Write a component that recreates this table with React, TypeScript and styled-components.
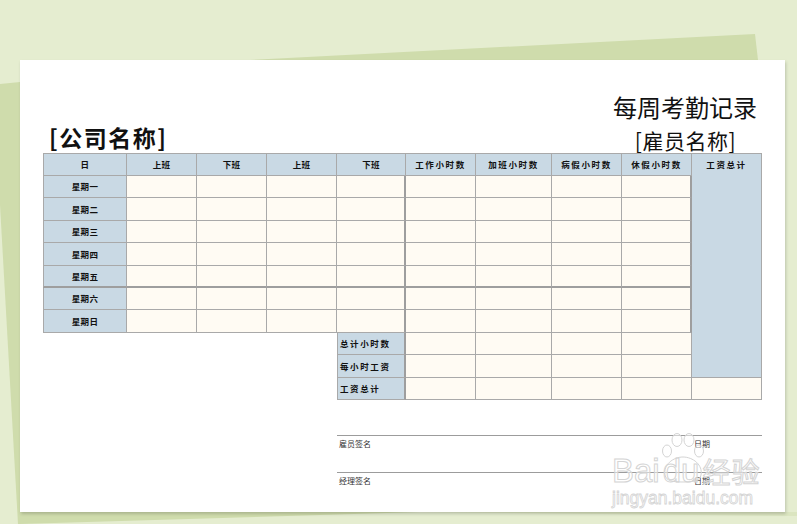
import React from "react";
import styled, { createGlobalStyle } from "styled-components";

const Global = createGlobalStyle`
  html, body { margin: 0; padding: 0; }
  body { width: 797px; height: 524px; overflow: hidden; background: #e5edd0; }
`;

const CJK = `"Noto Sans CJK SC", "Noto Sans", sans-serif`;

const Page = styled.div`
  position: relative;
  width: 797px;
  height: 524px;
  box-sizing: border-box;
  padding: 60px 12px 12px 20px;
  background: #e5edd0;
  overflow: hidden;
`;

const Backdrop = styled.svg`
  position: absolute;
  inset: 0;
  z-index: 0;
`;

const Sheet = styled.div`
  position: relative;
  z-index: 1;
  width: 765px;
  height: 452px;
  box-sizing: border-box;
  padding: 0 23px;
  background: #ffffff;
  box-shadow: 1px 2px 3px rgba(0, 0, 0, 0.18);
  display: flex;
  flex-direction: column;
`;

const Heading = styled.div`
  height: 93px;
  display: flex;
  justify-content: space-between;
  align-items: flex-end;
`;

const Company = styled.div`
  font-family: ${CJK};
  font-weight: 700;
  font-size: 23px;
  line-height: 26px;
  letter-spacing: 1.5px;
  color: #111;
  padding-left: 6px;
  margin-bottom: 3px;
`;

const TitleBlock = styled.div`
  display: flex;
  flex-direction: column;
  align-items: flex-end;
  padding-right: 5px;
`;

const Title = styled.div`
  font-family: ${CJK};
  font-weight: 400;
  font-size: 24px;
  line-height: 28px;
  color: #111;
`;

const Employee = styled.div`
  font-family: ${CJK};
  font-weight: 400;
  font-size: 21px;
  line-height: 26px;
  margin-top: 6px;
  margin-right: 21px;
  letter-spacing: 0.5px;
  color: #111;
`;

const colW = [84, 70, 70, 70, 69, 70, 76, 70, 70, 70];
const rowH = [23, 22, 23, 22, 23, 22, 22, 23, 22, 23, 22];

const Grid = styled.div`
  display: grid;
  grid-template-columns: ${colW.map((w) => `${w}px`).join(" ")};
  grid-template-rows: ${rowH.map((h) => `${h}px`).join(" ")};
  width: 719px;
`;

type CellProps = {
  $col: number;
  $row: number;
  $span?: number;
  $kind: "head" | "cream";
  $left?: boolean;
  $top?: boolean;
  $align?: "center" | "left" | "top";
  $spaced?: boolean;
  $heavyRight?: boolean;
  $heavyBottom?: boolean;
};

const Cell = styled.div<CellProps>`
  grid-column: ${(p) => p.$col};
  grid-row: ${(p) => p.$row} / span ${(p) => p.$span ?? 1};
  box-sizing: border-box;
  background: ${(p) => (p.$kind === "head" ? "#c9d9e4" : "#fffbf3")};
  border-right: ${(p) => (p.$heavyRight ? "2px solid #9e9e9e" : "1px solid #a9a9a9")};
  border-bottom: ${(p) => (p.$heavyBottom ? "2px solid #9e9e9e" : "1px solid #a9a9a9")};
  border-left: ${(p) => (p.$left ? "1px solid #a9a9a9" : "none")};
  border-top: ${(p) => (p.$top ? "1px solid #a9a9a9" : "none")};
  display: flex;
  justify-content: ${(p) => (p.$align === "left" ? "flex-start" : "center")};
  align-items: ${(p) => (p.$align === "top" ? "flex-start" : "center")};
  padding: ${(p) => (p.$align === "left" ? "0 0 0 2px" : p.$align === "top" ? "5px 0 0 0" : "0")};
  font-family: ${CJK};
  font-weight: 700;
  font-size: 8.5px;
  line-height: 11px;
  letter-spacing: ${(p) => (p.$spaced ? "1.6px" : "0.3px")};
  color: #111;
  white-space: nowrap;
`;

const Signatures = styled.div`
  margin-top: 35px;
  margin-left: 294px;
  width: 425px;
  display: flex;
  flex-direction: column;
`;

const SigRow = styled.div`
  height: 36px;
  border-top: 1px solid #9c9c9c;
  display: grid;
  grid-template-columns: 355px 1fr;
  font-family: ${CJK};
  font-size: 8px;
  line-height: 10px;
  color: #333;
`;

const SigText = styled.span`
  padding: 3px 0 0 2px;
`;

const Watermark = styled.div`
  position: absolute;
  left: 592px;
  top: 378px;
  display: flex;
  flex-direction: column;
  align-items: flex-start;
  pointer-events: none;
`;

const MarkLine = styled.div`
  display: flex;
  align-items: flex-end;
  height: 48px;
`;

const MarkBig = styled.span<{ $cjk?: boolean }>`
  font-family: ${(p) => (p.$cjk ? CJK : `"Liberation Sans", sans-serif`)};
  font-size: ${(p) => (p.$cjk ? "28px" : "33px")};
  font-weight: 400;
  line-height: 30px;
  color: rgba(255, 255, 255, 0.5);
  -webkit-text-stroke: 1px #d4d4d4;
  letter-spacing: ${(p) => (p.$cjk ? "1px" : "0")};
`;

const PawBox = styled.span`
  position: relative;
  display: inline-flex;
  align-items: flex-end;
  margin: 0 3px;
`;

const PawIcon = styled.svg`
  position: absolute;
  left: -4px;
  top: -25px;
`;

const MarkSmall = styled.span`
  font-family: "Liberation Sans", sans-serif;
  font-size: 17.5px;
  line-height: 20px;
  color: rgba(255, 255, 255, 0.5);
  -webkit-text-stroke: 0.8px #d4d4d4;
  margin-top: 2px;
`;

const heads = ["日", "上班", "下班", "上班", "下班", "工作小时数", "加班小时数", "病假小时数", "休假小时数"];
const days = ["星期一", "星期二", "星期三", "星期四", "星期五", "星期六", "星期日"];
const totals = ["总计小时数", "每小时工资", "工资总计"];

export default function App() {
  return (
    <>
      <Global />
      <Page>
        <Backdrop width="797" height="524" viewBox="0 0 797 524">
          <polygon points="250,60 755,34 758,60" fill="#cfdcac" />
          <polygon points="0,84 20,82 20,524 18,524 0,205" fill="#cfdcac" />
          <polygon points="20,512 420,512 20,524" fill="#cfdcac" />
          <polygon points="420,512 797,512 797,516" fill="#dbe5c0" />
        </Backdrop>
        <Sheet>
          <Heading>
            <Company>[公司名称]</Company>
            <TitleBlock>
              <Title>每周考勤记录</Title>
              <Employee>[雇员名称]</Employee>
            </TitleBlock>
          </Heading>
          <Grid>
            {heads.map((h, i) => (
              <Cell
                key={`h${i}`}
                $col={i + 1}
                $row={1}
                $kind="head"
                $top
                $left={i === 0}
                $spaced={h.length > 2}
              >
                {h}
              </Cell>
            ))}
            <Cell $col={10} $row={1} $span={10} $kind="head" $top $align="top" $spaced>
              工资总计
            </Cell>
            {days.map((d, r) => (
              <React.Fragment key={d}>
                <Cell $col={1} $row={r + 2} $kind="head" $left $heavyBottom={r === 4}>
                  {d}
                </Cell>
                {Array.from({ length: 8 }).map((_, c) => (
                  <Cell
                    key={c}
                    $col={c + 2}
                    $row={r + 2}
                    $kind="cream"
                    $heavyRight={c === 3 || c === 7}
                    $heavyBottom={r === 4}
                  />
                ))}
              </React.Fragment>
            ))}
            {totals.map((t, r) => (
              <React.Fragment key={t}>
                <Cell $col={5} $row={r + 9} $kind="head" $left $align="left" $spaced $heavyRight>
                  {t}
                </Cell>
                {Array.from({ length: 4 }).map((_, c) => (
                  <Cell key={c} $col={c + 6} $row={r + 9} $kind="cream" />
                ))}
              </React.Fragment>
            ))}
            <Cell $col={10} $row={11} $kind="cream" />
          </Grid>
          <Signatures>
            <SigRow>
              <SigText>雇员签名</SigText>
              <SigText>日期</SigText>
            </SigRow>
            <SigRow>
              <SigText>经理签名</SigText>
              <SigText>日期</SigText>
            </SigRow>
          </Signatures>
          <Watermark>
            <MarkLine>
              <MarkBig>Bai</MarkBig>
              <PawBox>
                <PawIcon width="48" height="52" viewBox="0 0 48 52">
                  <g fill="rgba(255,255,255,0.5)" stroke="#d4d4d4" strokeWidth="1">
                    <ellipse cx="8" cy="20" rx="4.5" ry="6" />
                    <ellipse cx="18" cy="9" rx="5" ry="6.5" />
                    <ellipse cx="30" cy="9" rx="5" ry="6.5" />
                    <ellipse cx="40" cy="20" rx="4.5" ry="6" />
                    <path d="M6 44 C4 34 14 26 24 26 C34 26 44 34 42 44 C41 50 34 51 24 51 C14 51 7 50 6 44 Z" fill="none" />
                  </g>
                </PawIcon>
                <MarkBig>du</MarkBig>
              </PawBox>
              <MarkBig $cjk>经验</MarkBig>
            </MarkLine>
            <MarkSmall>jingyan.baidu.com</MarkSmall>
          </Watermark>
        </Sheet>
      </Page>
    </>
  );
}
